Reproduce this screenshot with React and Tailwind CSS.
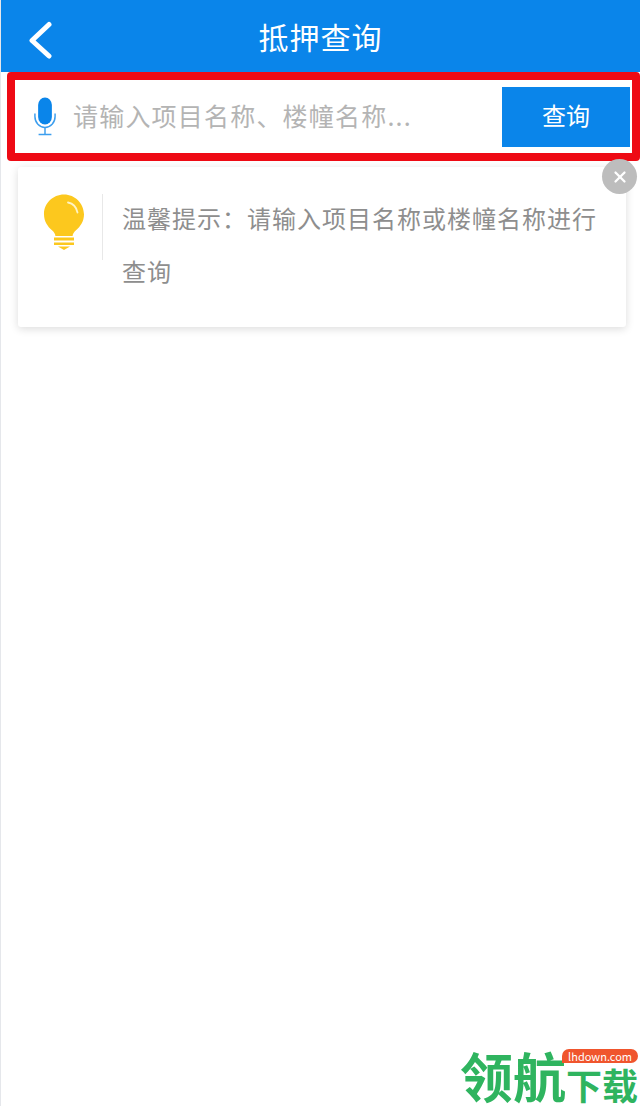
import { X } from "lucide-react";

const cjk = { fontFamily: '"Noto Sans CJK SC", "Noto Sans", sans-serif' };

function MicIcon() {
  return (
    <svg width="22" height="40" viewBox="0 0 24 40" fill="none" preserveAspectRatio="none" className="shrink-0">
      <rect x="4.5" y="0.5" width="15" height="27" rx="7.5" fill="#0a85ea" />
      <path d="M1 16.5v3a11 11 0 0 0 22 0v-3" stroke="#3c9eee" strokeWidth="1.6" />
      <path d="M12 30.5v7M5 37.5h14" stroke="#3c9eee" strokeWidth="1.6" />
    </svg>
  );
}

function BulbIcon() {
  return (
    <svg width="42" height="56" viewBox="0 0 42 56" fill="none">
      <path d="M21 0.5C9.8 0.5 1 9.4 1 20.2c0 7 3.6 12.2 8 16 2.4 2 3.2 3.8 3.4 5.8h17.2c.2-2 1-3.8 3.4-5.8 4.4-3.8 8-9 8-16C40.6 9.4 32.2.5 21 .5z" fill="#fcc81e" />
      <path d="M25 8.5c5 1 8.5 5 9.5 10" stroke="#fff3c4" strokeWidth="1.8" strokeLinecap="round" />
      <path d="M11 43.5h20v3H11zM11 48.5h20v2.500H11z" fill="#fcc81e" />
      <path d="M15 52.5h12l-6 3.5z" fill="#fcc81e" />
    </svg>
  );
}

export default function App() {
  return (
    <div className="relative h-[1106px] w-[640px] overflow-hidden bg-white border-l border-gray-200" style={cjk}>
      <header className="relative flex h-[72px] items-center justify-center bg-[#0a85ea] pb-[1px] text-white">
        <svg className="absolute left-[26px] top-[21px]" width="26" height="38" viewBox="0 0 26 38" fill="none">
          <path d="M22 3.5 5 19.5l17 15.5" stroke="#fff" strokeWidth="5" strokeLinecap="round" strokeLinejoin="round" />
        </svg>
        <h1 className="text-[30px] leading-none tracking-[1px]">抵押查询</h1>
      </header>

      <div className="ml-[6px] flex h-[89px] w-[633px] items-center rounded-[4px] border-[8px] border-[#ee0a14] bg-white pl-[19px] pr-[2px]">
        <MicIcon />
        <span className="ml-[17px] flex-1 whitespace-nowrap pb-[2px] text-[25px] leading-none tracking-[1.2px] text-[#b4b4b4]">请输入项目名称、楼幢名称...</span>
        <button className="flex h-[60px] w-[128px] shrink-0 items-center justify-center bg-[#0a85ea] pb-[4px] text-[24px] text-white">查询</button>
      </div>

      <div className="relative ml-[17px] mt-[6px] flex h-[160px] w-[608px] items-start rounded-[3px] bg-white shadow-[0_2px_8px_rgba(0,0,0,0.14)]">
        <div className="mt-[27px] flex h-[66px] w-[85px] shrink-0 justify-center border-r border-[#e8e8e8] pl-[8px]">
          <BulbIcon />
        </div>
        <p className="ml-[19px] mt-[24px] w-[482px] text-[24px] leading-[53px] tracking-[1px] text-[#8e8e8e]">温馨提示：请输入项目名称或楼幢名称进行查询</p>
        <button className="absolute right-[-11px] top-[-8px] flex h-[35px] w-[35px] items-center justify-center rounded-full bg-[#bdbdbd] text-white">
          <X size={18} strokeWidth={3} />
        </button>
      </div>

      <div className="absolute bottom-[4px] right-[2px] flex items-end whitespace-nowrap font-bold leading-none text-[#2fb45f]">
        <span className="text-[53px] leading-[53px]">领航</span>
        <span className="text-[36px] leading-[36px]">下载</span>
        <span className="absolute right-0 top-0 rounded-[8px] rounded-bl-none bg-[#f0552d] px-[6px] text-[11px] font-normal leading-[14px] text-white">lhdown.com</span>
      </div>
    </div>
  );
}
